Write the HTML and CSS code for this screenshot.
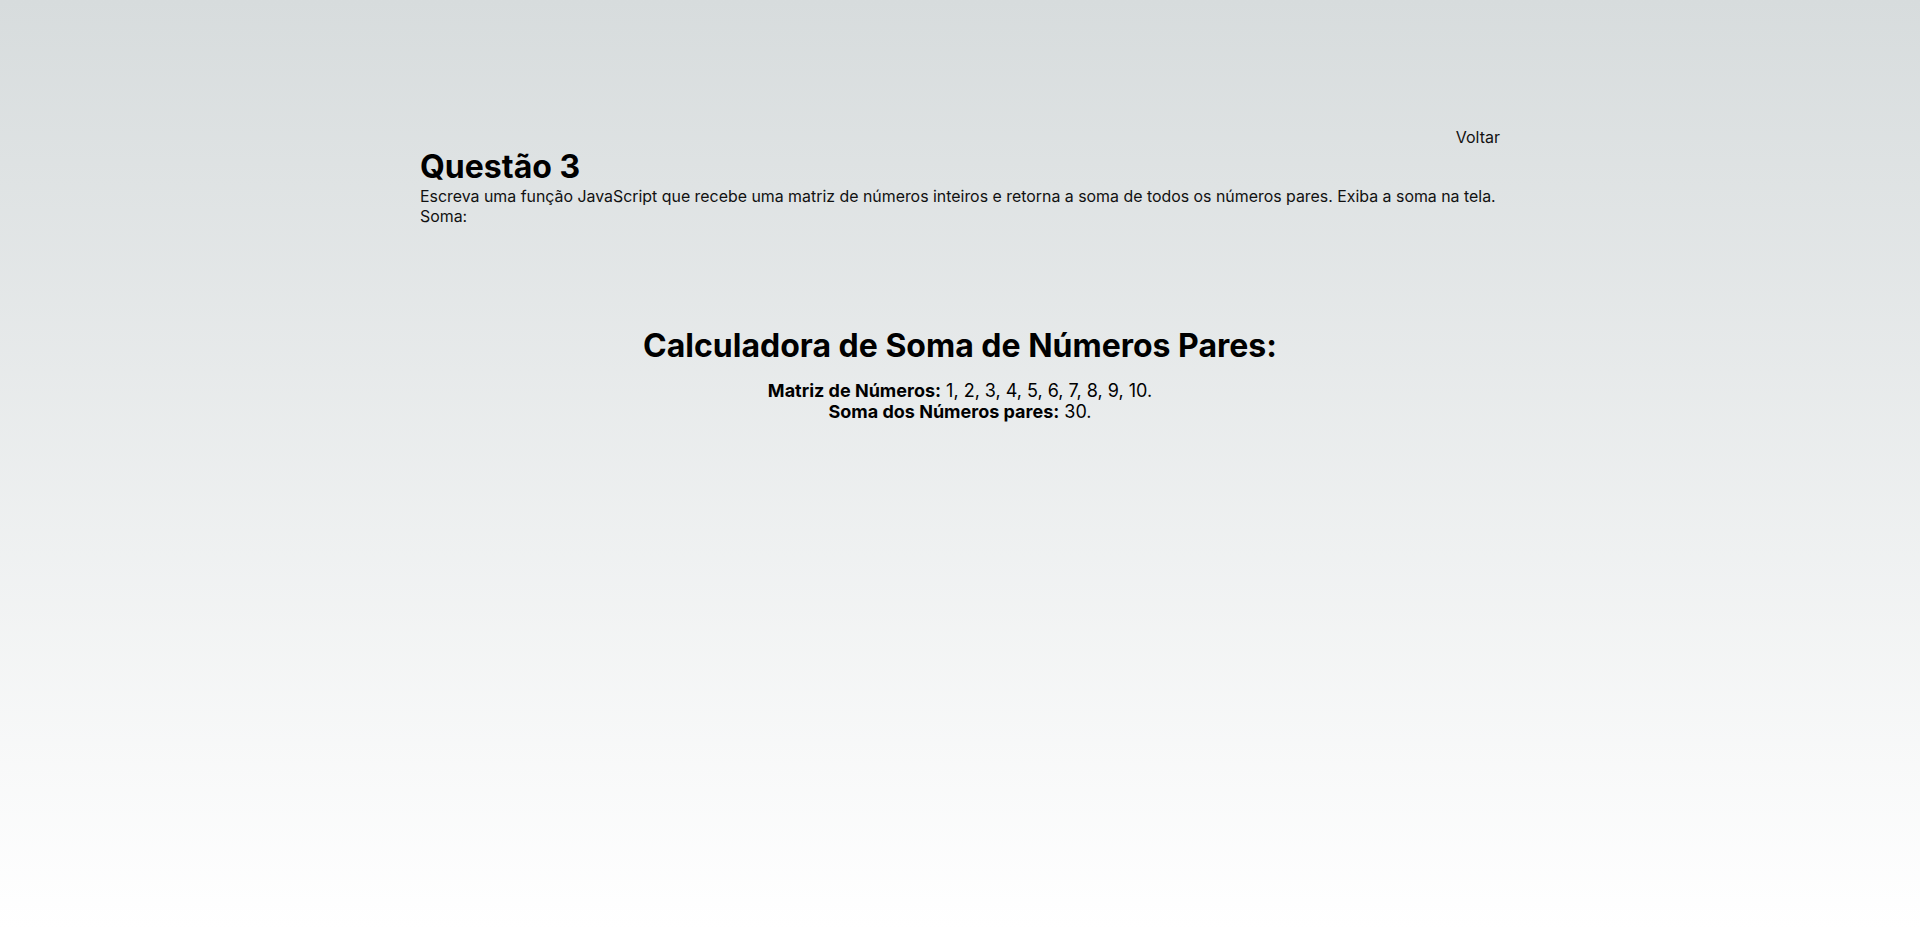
FILE: index.html
```html
<!DOCTYPE html>
<html lang="pt-BR">
<head>
<meta charset="utf-8">
<title>Questão 3</title>
<link rel="stylesheet" href="styles.css">
</head>
<body>
<div class="page">
  <main class="container">
    <nav class="topbar"><a class="back" href="#">Voltar</a></nav>
    <h1 class="title">Questão 3</h1>
    <p class="desc">Escreva uma função JavaScript que recebe uma matriz de números inteiros e retorna a soma de todos os números pares. Exiba a soma na tela.</p>
    <p class="desc">Soma:</p>
    <section class="calc">
      <h2 class="calc-title">Calculadora de Soma de Números Pares:</h2>
      <div class="calc-body">
        <p class="line"><strong>Matriz de Números:</strong> 1, 2, 3, 4, 5, 6, 7, 8, 9, 10.</p>
        <p class="line"><strong>Soma dos Números pares:</strong> 30.</p>
      </div>
    </section>
  </main>
</div>
</body>
</html>
```

FILE: styles.css
```css
* { box-sizing: border-box; }
html, body { margin: 0; padding: 0; height: 100%; }
body {
  font-family: Inter, "Noto Sans", sans-serif;
  color: #000;
}
.page {
  min-height: 100vh;
  background: linear-gradient(to bottom, #d7dcdd 0%, #ffffff 100%);
  padding-top: 127px;
}
.container {
  width: 1080px;
  margin: 0 auto;
}
.topbar {
  display: flex;
  justify-content: flex-end;
}
.back {
  font-size: 16px;
  line-height: normal;
  color: #111;
  text-decoration: none;
}
.title {
  margin: 0;
  font-size: 32px;
  line-height: normal;
  font-weight: 700;
}
.desc {
  margin: 0;
  font-size: 15.9px;
  line-height: 19.5px;
  color: #111;
}
.desc:first-of-type { margin-top: 1px; }
.calc {
  margin-top: 100px;
  display: flex;
  flex-direction: column;
  align-items: center;
}
.calc-title {
  margin: 0;
  font-size: 32px;
  line-height: normal;
  font-weight: 700;
}
.calc-body {
  margin-top: 15px;
  text-align: center;
}
.line {
  margin: 0;
  font-size: 18px;
  line-height: normal;
}
.line strong { font-weight: 700; }
```
